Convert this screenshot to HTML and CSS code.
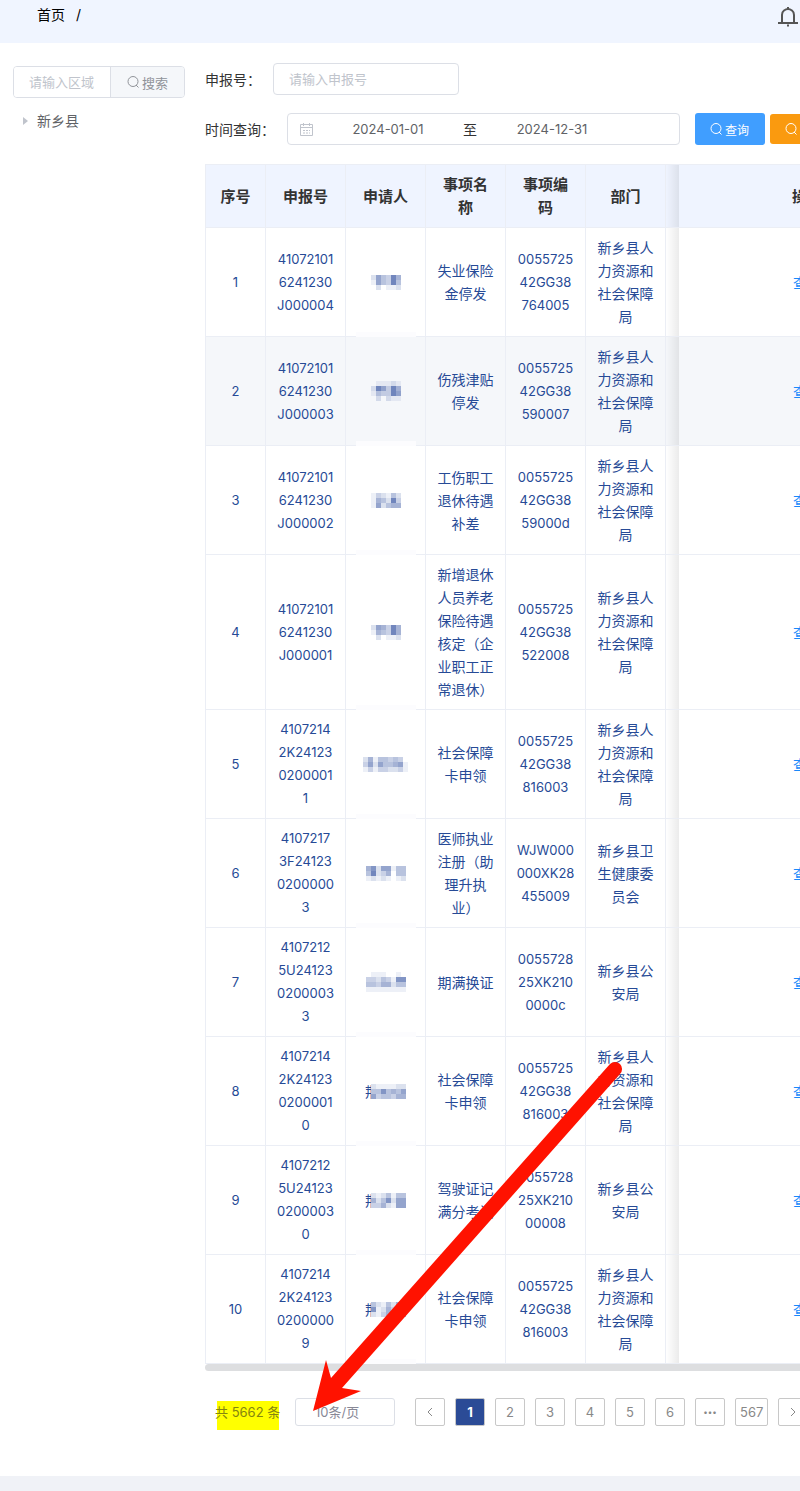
FILE: index.html
```html
<!DOCTYPE html>
<html lang="zh-CN">
<head>
  <meta charset="utf-8" />
  <title>首页</title>
  <meta name="viewport" content="width=device-width, initial-scale=1" />
  <link rel="stylesheet" href="styles.css">
</head>
<body>
  <header class="topbar">
    <nav class="breadcrumb"><a href="#">首页</a><span>/</span></nav>
    <a href="#" class="bell" aria-label="通知">
      <svg width="20" height="20" viewBox="0 0 20 20" fill="none" stroke="#555" stroke-width="2">
        <path d="M4 16V8q0-3 2-4.500Q8 2 10 2t4 1.500Q16 5 16 8v8M0 16h20M10 0v2M9 18.500h2" />
      </svg>
    </a>
  </header>

  <main class="layout">
    <aside class="sidebar">
      <form class="area-search">
        <input type="text" placeholder="请输入区域" aria-label="区域" />
        <button type="button">
          <svg class="icon" viewBox="0 0 12 12"><circle cx="6" cy="5.500" r="5" /><path d="M9 9l2.500 2.500" /></svg>
          搜索
        </button>
      </form>
      <ul class="tree">
        <li><span class="caret"></span>新乡县</li>
      </ul>
    </aside>

    <section class="content">
      <form class="filters">
        <div class="filter-row">
          <label for="apply-no">申报号：</label>
          <input type="text" id="apply-no" class="text-input" placeholder="请输入申报号" />
        </div>
        <div class="filter-row">
          <label for="date-start">时间查询：</label>
          <div class="date-range">
            <svg width="13" height="13" viewBox="0 0 13 13" fill="none" stroke="#c0c4cc">
              <path d="M.5 1.500h12v11H.5zM.5 4.500h12M3.500 0v3M9.500 0v3" />
              <path d="M3 7.500h7M3 10h7" stroke-dasharray="2 1" />
            </svg>
            <input type="text" id="date-start" value="2024-01-01" />
            <span>至</span>
            <input type="text" value="2024-12-31" aria-label="结束日期" />
          </div>
          <div class="actions">
            <button type="button" class="btn btn-query">
              <svg class="icon" viewBox="0 0 12 12"><circle cx="6" cy="5.500" r="5" /><path d="M9 9l2.500 2.500" /></svg>
              查询
            </button>
            <button type="button" class="btn btn-more">
              <svg class="icon" viewBox="0 0 12 12"><circle cx="6" cy="5.500" r="5" /><path d="M9 9l2.500 2.500" /></svg>
              高级查询
            </button>
          </div>
        </div>
      </form>

      <div class="results">
        <table class="grid">
          <colgroup>
            <col class="col-index"><col class="col"><col class="col"><col class="col"><col class="col"><col class="col"><col class="col-edge"><col class="col-action">
          </colgroup>
          <thead>
            <tr>
              <th>序号</th>
              <th>申报号</th>
              <th>申请人</th>
              <th>事项名称</th>
              <th>事项编码</th>
              <th>部门</th>
              <th class="edge"></th>
              <th>操作</th>
            </tr>
          </thead>
          <tbody>
            <tr>
              <td class="num">1</td>
              <td class="num">41072101<br>6241230<br>J000004</td>
              <td class="name"><span class="mask" data-px="264385 164384 020112"></span></td>
              <td>失业保险<br>金停发</td>
              <td class="num">0055725<br>42GG38<br>764005</td>
              <td>新乡县人<br>力资源和<br>社会保障<br>局</td>
              <td class="edge"></td>
              <td><a href="#">查看</a></td>
            </tr>
            <tr class="active">
              <td class="num">2</td>
              <td class="num">41072101<br>6241230<br>J000003</td>
              <td class="name"><span class="mask" data-px="011121 286385 143386 020211"></span></td>
              <td>伤残津贴<br>停发</td>
              <td class="num">0055725<br>42GG38<br>590007</td>
              <td>新乡县人<br>力资源和<br>社会保障<br>局</td>
              <td class="edge"></td>
              <td><a href="#">查看</a></td>
            </tr>
            <tr>
              <td class="num">3</td>
              <td class="num">41072101<br>6241230<br>J000002</td>
              <td class="name"><span class="mask" data-px="132142 154283 162455"></span></td>
              <td>工伤职工<br>退休待遇<br>补差</td>
              <td class="num">0055725<br>42GG38<br>59000d</td>
              <td>新乡县人<br>力资源和<br>社会保障<br>局</td>
              <td class="edge"></td>
              <td><a href="#">查看</a></td>
            </tr>
            <tr>
              <td class="num">4</td>
              <td class="num">41072101<br>6241230<br>J000001</td>
              <td class="name"><span class="mask" data-px="265385 154385 020112"></span></td>
              <td>新增退休<br>人员养老<br>保险待遇<br>核定（企<br>业职工正<br>常退休）</td>
              <td class="num">0055725<br>42GG38<br>522008</td>
              <td>新乡县人<br>力资源和<br>社会保障<br>局</td>
              <td class="edge"></td>
              <td><a href="#">查看</a></td>
            </tr>
            <tr>
              <td class="num">5</td>
              <td class="num">4107214<br>2K24123<br>0200001<br>1</td>
              <td class="name"><span class="mask" data-px="251443430 362644561 131332231"></span></td>
              <td>社会保障<br>卡申领</td>
              <td class="num">0055725<br>42GG38<br>816003</td>
              <td>新乡县人<br>力资源和<br>社会保障<br>局</td>
              <td class="edge"></td>
              <td><a href="#">查看</a></td>
            </tr>
            <tr>
              <td class="num">6</td>
              <td class="num">4107217<br>3F24123<br>0200000<br>3</td>
              <td class="name"><span class="mask" data-px="57266144 48235044 12121012"></span></td>
              <td>医师执业<br>注册（助<br>理升执<br>业）</td>
              <td class="num">WJW000<br>000XK28<br>455009</td>
              <td>新乡县卫<br>生健康委<br>员会</td>
              <td class="edge"></td>
              <td><a href="#">查看</a></td>
            </tr>
            <tr>
              <td class="num">7</td>
              <td class="num">4107212<br>5U24123<br>0200003<br>3</td>
              <td class="name"><span class="mask" data-px="01110010 33243177 44355244 11111111"></span></td>
              <td>期满换证</td>
              <td class="num">0055728<br>25XK210<br>0000c</td>
              <td>新乡县公<br>安局</td>
              <td class="edge"></td>
              <td><a href="#">查看</a></td>
            </tr>
            <tr>
              <td class="num">8</td>
              <td class="num">4107214<br>2K24123<br>0200001<br>0</td>
              <td class="name"><span class="peek">荆</span><span class="mask" data-px="2111122 4474546 6344355"></span></td>
              <td>社会保障<br>卡申领</td>
              <td class="num">0055725<br>42GG38<br>816003</td>
              <td>新乡县人<br>力资源和<br>社会保障<br>局</td>
              <td class="edge"></td>
              <td><a href="#">查看</a></td>
            </tr>
            <tr>
              <td class="num">9</td>
              <td class="num">4107212<br>5U24123<br>0200003<br>0</td>
              <td class="name"><span class="peek">荆</span><span class="mask" data-px="2124144 5247266 3352166"></span></td>
              <td>驾驶证记<br>满分考试</td>
              <td class="num">0055728<br>25XK210<br>00008</td>
              <td>新乡县公<br>安局</td>
              <td class="edge"></td>
              <td><a href="#">查看</a></td>
            </tr>
            <tr>
              <td class="num">10</td>
              <td class="num">4107214<br>2K24123<br>0200000<br>9</td>
              <td class="name"><span class="peek">荆</span><span class="mask" data-px="4214255 7125355 2135345"></span></td>
              <td>社会保障<br>卡申领</td>
              <td class="num">0055725<br>42GG38<br>816003</td>
              <td>新乡县人<br>力资源和<br>社会保障<br>局</td>
              <td class="edge"></td>
              <td><a href="#">查看</a></td>
            </tr>
          </tbody>
        </table>
        <div class="scrollbar"></div>

        <div class="pagination">
          <span class="total">共 5662 条</span>
          <select class="page-size" aria-label="每页条数"><option>10条/页</option></select>
          <nav class="pages">
            <button type="button" aria-label="上一页"><svg width="6" height="10" viewBox="0 0 6 10"><path d="M5 1L1 5l4 4" /></svg></button>
            <button type="button" class="current">1</button>
            <button type="button">2</button>
            <button type="button">3</button>
            <button type="button">4</button>
            <button type="button">5</button>
            <button type="button">6</button>
            <button type="button" class="more">•••</button>
            <button type="button">567</button>
            <button type="button" aria-label="下一页"><svg width="6" height="10" viewBox="0 0 6 10"><path d="M1 1l4 4-4 4" /></svg></button>
          </nav>
        </div>

        <svg class="arrow" width="320" height="360" viewBox="0 0 320 360">
          <path d="M1 351L14 300L19 318L298 4A7 7 0 0 1 308 14L30 328L49 331Z" fill="#ff1200" />
        </svg>
      </div>
    </section>
  </main>

  <script src="mask.js"></script>
</body>
</html>
```

FILE: styles.css
```css
* {
  box-sizing: border-box;
  margin: 0;
  padding: 0;
}
body {
  min-height: 100vh;
  display: flex;
  flex-direction: column;
  background-color: #f0f2f7;
  font-family: Inter, "Noto Sans CJK SC", sans-serif;
  font-size: 14px;
  color: #333;
}
input, button, select {
  font-family: inherit;
  font-size: 13px;
}
button {
  cursor: pointer;
}
a {
  color: inherit;
  text-decoration: none;
}
.icon {
  width: 12px;
  height: 12px;
  fill: none;
  stroke: currentColor;
}
.topbar {
  display: flex;
  justify-content: space-between;
  height: 43px;
  padding: 4px 2px 0 37px;
  background-color: #f0f5ff;
}
.breadcrumb {
  display: flex;
  gap: 11px;
  line-height: 22px;
  color: #000;
}
.bell {
  padding-top: 3px;
}
.layout {
  display: flex;
  flex: 1;
  align-items: flex-start;
  gap: 20px;
  overflow: hidden;
  padding: 20px 0 46px 13px;
  margin-bottom: 15px;
  background-color: #fff;
}

/* area tree */
.sidebar {
  flex: 0 0 172px;
  min-width: 0;
  padding-top: 3px;
}
.area-search {
  display: flex;
  height: 32px;
  border: 1px solid #dcdfe6;
  border-radius: 4px;
  overflow: hidden;
}
.area-search input {
  flex: 1;
  min-width: 0;
  padding: 0 15px;
  border: none;
}
.area-search button {
  display: flex;
  align-items: center;
  justify-content: center;
  flex: 0 0 74px;
  gap: 3px;
  border: none;
  border-left: 1px solid #dcdfe6;
  background-color: #f5f7fa;
  color: #909399;
}
::placeholder {
  color: #c0c4cc;
}
.tree {
  margin-top: 10px;
  list-style: none;
  line-height: 26px;
  color: #606266;
}
.tree li {
  display: flex;
  align-items: center;
  gap: 9px;
  padding-left: 10px;
}
.caret {
  border: 4px solid transparent;
  border-left: 5px solid #c0c4cc;
  border-right: 0;
}

/* filters */
.content {
  flex: 1 0 731px;
}
.filters {
  display: flex;
  flex-direction: column;
  gap: 18px;
  margin-bottom: 19px;
}
.filter-row {
  display: flex;
  align-items: center;
  gap: 12px;
  height: 32px;
}
.text-input {
  width: 186px;
  height: 32px;
  padding: 0 15px;
  border: 1px solid #dcdfe6;
  border-radius: 4px;
}
.date-range {
  display: flex;
  align-items: center;
  width: 393px;
  height: 32px;
  padding: 0 12px;
  border: 1px solid #dcdfe6;
  border-radius: 4px;
}
.date-range input {
  flex: 1;
  min-width: 0;
  border: none;
  text-align: center;
  color: #606266;
}
.date-range input:last-child {
  margin-right: 40px;
}
.actions {
  display: flex;
  align-items: center;
  gap: 5px;
  padding-left: 3px;
}
.btn {
  display: flex;
  align-items: center;
  gap: 3px;
  height: 32px;
  padding: 0 15px;
  border: none;
  border-radius: 3px;
  color: #fff;
  font-size: 12px;
  white-space: nowrap;
}
.btn-query {
  width: 70px;
  background-color: #409eff;
}
.btn-more {
  height: 30px;
  background-color: #fa9a0f;
}

/* result table */
.results {
  position: relative;
}
.grid {
  width: 100%;
  table-layout: fixed;
  border-collapse: separate;
  border-spacing: 0;
  border-top: 1px solid #ebeef5;
  border-left: 1px solid #ebeef5;
  line-height: 23px;
  text-align: center;
  color: #264a96;
}
.col-index {
  width: 60px;
}
.col {
  width: 80px;
}
.col-edge {
  width: 13px;
}
.grid th,
.grid td {
  padding: 8px 10px;
  border-right: 1px solid #ebeef5;
  border-bottom: 1px solid #ebeef5;
}
.grid td {
  padding: 8px 0;
}
.grid th {
  background-color: #eff4ff;
  color: #333;
  font-size: 15px;
  font-weight: 700;
}
.grid .num {
  font-size: 13px;
}
.grid .edge {
  padding: 0;
  border-right: none;
  background-image: linear-gradient(to right, transparent, rgba(0, 0, 0, 0.08));
}
.grid .active td {
  background-color: #f5f7fa;
}
.grid a {
  color: #1989fa;
}
.grid .name {
  position: relative;
  line-height: 0;
}
.grid .name::after {
  content: "";
  position: absolute;
  left: 10px;
  bottom: -1px;
  width: 60px;
  height: 5px;
  background-color: #fcfcfe;
}
.mask {
  display: inline-block;
  vertical-align: middle;
}
.mask svg {
  display: block;
  fill: #4d68ac;
}
.peek {
  display: inline-block;
  width: 6px;
  overflow: hidden;
  vertical-align: middle;
  line-height: 23px;
}
.scrollbar {
  height: 7px;
  border-radius: 4px 0 0 4px;
  background-color: #dddee0;
}

/* pagination */
.pagination {
  display: flex;
  align-items: center;
  margin-top: 23px;
  padding-left: 10px;
  color: #888;
}
.total {
  width: 65px;
  margin-right: 15px;
  font-size: 13px;
  line-height: 36px;
  white-space: nowrap;
  color: #85850f;
  background: linear-gradient(#ff0, #ff0) no-repeat 2px 7px / 62px 29px;
}
.page-size {
  width: 100px;
  height: 28px;
  margin-right: 20px;
  padding: 0 19px;
  appearance: none;
  border: 1px solid #dcdfe6;
  border-radius: 3px;
  background-color: #fff;
  color: #888896;
}
.pages {
  display: flex;
  gap: 10px;
}
.pages button {
  display: flex;
  align-items: center;
  justify-content: center;
  min-width: 30px;
  height: 28px;
  padding: 0 4px;
  border: 1px solid #c8c8c8;
  border-radius: 2px;
  background-color: #fff;
  color: #888;
}
.pages .current {
  background-color: #2b4b96;
  color: #fff;
  font-weight: 700;
}
.pages .more {
  font-size: 8px;
}
.pages svg {
  fill: none;
  stroke: #888;
}
.arrow {
  position: absolute;
  left: 107px;
  top: 896px;
  pointer-events: none;
}
```

FILE: mask.js
```javascript
// each digit in data-px is the strength of one 5px tile
const TILE = 5;

document.querySelectorAll(".mask").forEach(function(el) {
  const rows = el.dataset.px.split(" ");
  const w = rows[0].length * TILE;
  const h = rows.length * TILE;
  let tiles = "";
  rows.forEach(function(row, y) {
    [...row].forEach(function(level, x) {
      tiles += `<rect x="${x * TILE}" y="${y * TILE}" width="${TILE}" height="${TILE}" fill-opacity="${level / 10}" />`;
    });
  });
  el.innerHTML = `<svg width="${w}" height="${h}" shape-rendering="crispEdges">${tiles}</svg>`;
});
```
